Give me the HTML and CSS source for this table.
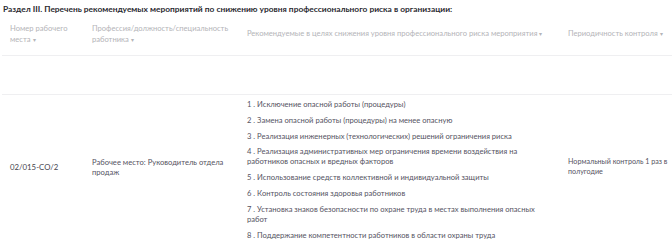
FILE: index.html
```html
<!DOCTYPE html>
<html lang="ru">
<head>
<meta charset="utf-8">
<link rel="stylesheet" href="styles.css">
</head>
<body>
<div class="page">
  <h3 class="title">Раздел III. Перечень рекомендуемых мероприятий по снижению уровня профессионального риска в организации:</h3>
  <table class="tbl">
    <colgroup>
      <col class="c1"><col class="c2"><col class="c3"><col class="c4">
    </colgroup>
    <thead>
      <tr class="head">
        <th>Номер рабочего места <span class="arr">▾</span></th>
        <th>Профессия/должность/специальность работника <span class="arr">▾</span></th>
        <th>Рекомендуемые в целях снижения уровня профессионального риска мероприятия <span class="arr">▾</span></th>
        <th>Периодичность контроля <span class="arr">▾</span></th>
      </tr>
    </thead>
    <tbody>
      <tr class="empty"><td colspan="4"></td></tr>
      <tr class="row">
        <td class="num">02/015-СО/2</td>
        <td>Рабочее место: Руководитель отдела продаж</td>
        <td>
          <ol class="measures">
            <li>1 . Исключение опасной работы (процедуры)</li>
            <li>2 . Замена опасной работы (процедуры) на менее опасную</li>
            <li>3 . Реализация инженерных (технологических) решений ограничения риска</li>
            <li>4 . Реализация административных мер ограничения времени воздействия на работников опасных и вредных факторов</li>
            <li>5 . Использование средств коллективной и индивидуальной защиты</li>
            <li>6 . Контроль состояния здоровья работников</li>
            <li>7 . Установка знаков безопасности по охране труда в местах выполнения опасных работ</li>
            <li>8 . Поддержание компетентности работников в области охраны труда</li>
          </ol>
        </td>
        <td class="last">Нормальный контроль 1 раз в полугодие</td>
      </tr>
    </tbody>
  </table>
</div>
</body>
</html>
```
FILE: styles.css
```css
html, body {
  margin: 0;
  padding: 0;
  background: #fff;
}
body {
  font-family: Lato, "Noto Sans", sans-serif;
  color: #4d4b57;
  overflow: hidden;
}
.page {
  padding: 4px 0 0 2px;
}
.title {
  margin: 0 0 0 1px;
  font-size: 8.4px;
  line-height: 10px;
  font-weight: 700;
  color: #2a2a30;
}
.tbl {
  border-collapse: collapse;
  table-layout: fixed;
  width: 678px;
  margin-top: 0;
}
.c1 { width: 82px; }
.c2 { width: 155px; }
.c3 { width: 321px; }
.c4 { width: 120px; }
.tbl th, .tbl td {
  padding: 0 8px;
  text-align: left;
  vertical-align: middle;
  font-size: 7.6px;
  line-height: 10px;
}
.tbl th:last-child, .tbl td.last {
  padding-right: 0;
}
.head th {
  height: 37px;
  padding-top: 1px;
  padding-bottom: 3px;
  font-weight: 400;
  line-height: 11px;
  color: #b4b4b8;
  border-bottom: 1px solid #efeff1;
}
.arr {
  font-size: 6px;
}
.empty td {
  height: 38px;
  border-bottom: 1px solid #efeff1;
}
.row td {
  color: #55535f;
}
.row td.last {
  font-size: 7.15px;
  padding-right: 10px;
}
.row td.num {
  font-size: 7.8px;
  color: #45434d;
}
.measures {
  list-style: none;
  margin: 0;
  padding: 4px 0 0;
  display: flex;
  flex-direction: column;
  gap: 5.8px;
}
```
